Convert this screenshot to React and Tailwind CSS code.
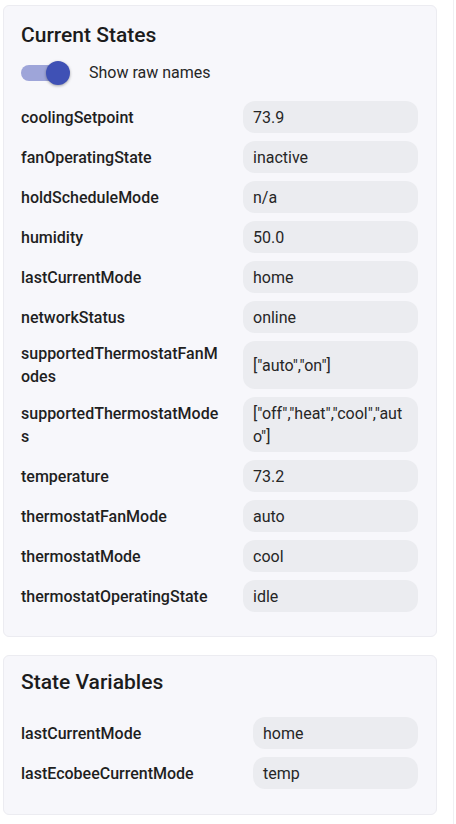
import React from "react";

const current = [
  ["coolingSetpoint", "73.9"],
  ["fanOperatingState", "inactive"],
  ["holdScheduleMode", "n/a"],
  ["humidity", "50.0"],
  ["lastCurrentMode", "home"],
  ["networkStatus", "online"],
  ["supportedThermostatFanModes", '["auto","on"]'],
  ["supportedThermostatModes", '["off","heat","cool","auto"]'],
  ["temperature", "73.2"],
  ["thermostatFanMode", "auto"],
  ["thermostatMode", "cool"],
  ["thermostatOperatingState", "idle"],
];

const vars = [
  ["lastCurrentMode", "home"],
  ["lastEcobeeCurrentMode", "temp"],
];

function Rows({ items, cols }) {
  return (
    <div className={`grid ${cols} gap-y-2 items-stretch`}>
      {items.map(([k, v]) => (
        <React.Fragment key={k}>
          <div className="flex items-center py-[1px] text-[16px] leading-[23px] font-medium text-[#1f1f1f] break-all">
            {k}
          </div>
          <div className="flex items-center rounded-[12px] bg-[#ebecf0] px-[10px] py-[4.5px] text-[16px] leading-[23px] text-[#262626] break-all">
            {v}
          </div>
        </React.Fragment>
      ))}
    </div>
  );
}

export default function App() {
  return (
    <div
      className="flex w-[456px] min-h-[824px] bg-white"
      style={{ fontFamily: "Roboto, 'Liberation Sans', sans-serif" }}
    >
      <div className="w-[454px] border-r border-[#f0f0f3] pt-[5px] pl-[3px]">
        <div className="w-[434px] rounded-[6px] border border-[#ececf1] bg-[#f7f7fb] px-[17px] pt-[15px] pb-[24px]">
          <div className="text-[21px] leading-[28px] font-medium text-[#1c1c1c]">Current States</div>
          <div className="mt-[12px] flex items-center h-[24px]">
            <div className="relative w-[46px] h-[16px] rounded-full bg-[#9ea5d9]">
              <div className="absolute left-[25px] top-[-4px] w-[24px] h-[24px] rounded-full bg-[#3f51b5] shadow-[0_1px_3px_rgba(0,0,0,0.35)]" />
            </div>
            <span className="ml-[22px] text-[16px] text-[#262626]">Show raw names</span>
          </div>
          <div className="mt-[16px]">
            <Rows items={current} cols="grid-cols-[205px_175px] gap-x-[17px]" />
          </div>
        </div>
        <div className="mt-[18px] w-[434px] rounded-[6px] border border-[#ececf1] bg-[#f7f7fb] px-[17px] pt-[12px] pb-[25px]">
          <div className="text-[21px] leading-[28px] font-medium text-[#1c1c1c]">State Variables</div>
          <div className="mt-[21px]">
            <Rows items={vars} cols="grid-cols-[222px_165px] gap-x-[10px]" />
          </div>
        </div>
      </div>
    </div>
  );
}
